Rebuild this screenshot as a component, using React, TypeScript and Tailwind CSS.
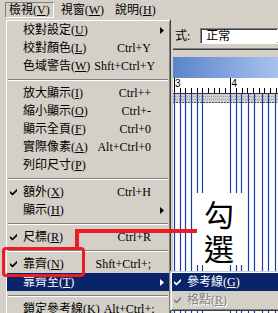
type MenuItem =
  | { sep: true }
  | {
      sep?: false;
      label: string;
      hotkey: string;
      shortcut?: string;
      checked?: boolean;
      sub?: boolean;
      active?: boolean;
    };

const menuItems: MenuItem[] = [
  { label: "校對設定", hotkey: "U", sub: true },
  { label: "校對顏色", hotkey: "L", shortcut: "Ctrl+Y" },
  { label: "色域警告", hotkey: "W", shortcut: "Shft+Ctrl+Y" },
  { sep: true },
  { label: "放大顯示", hotkey: "I", shortcut: "Ctrl++" },
  { label: "縮小顯示", hotkey: "O", shortcut: "Ctrl+-" },
  { label: "顯示全頁", hotkey: "F", shortcut: "Ctrl+0" },
  { label: "實際像素", hotkey: "A", shortcut: "Alt+Ctrl+0" },
  { label: "列印尺寸", hotkey: "P" },
  { sep: true },
  { label: "額外", hotkey: "X", shortcut: "Ctrl+H", checked: true },
  { label: "顯示", hotkey: "H", sub: true },
  { sep: true },
  { label: "尺標", hotkey: "R", shortcut: "Ctrl+R", checked: true },
  { sep: true },
  { label: "靠齊", hotkey: "N", shortcut: "Shft+Ctrl+;", checked: true },
  { label: "靠齊至", hotkey: "T", sub: true, active: true },
  { sep: true },
  { label: "鎖定參考線", hotkey: "K", shortcut: "Alt+Ctrl+;" },
];

// guide lines, x relative to the document's left edge
const guides = [1, 7, 12, 18, 24, 29, 57, 63, 68, 75, 81, 89, 95, 102];

const Check = ({ color = "#000" }: { color?: string }) => (
  <svg width="7" height="8" viewBox="0 0 7 8">
    <polygon points="0,3 2.5,5.3 7,0.8 7,3.2 2.5,7.6 0,5.3" fill={color} />
  </svg>
);

const Arrow = ({ color = "#000" }: { color?: string }) => (
  <svg width="4" height="7" viewBox="0 0 4 7" className="absolute right-[5px] top-[5.5px]">
    <polygon points="0,0 4,3.5 0,7" fill={color} />
  </svg>
);

const Label = ({ label, hotkey }: { label: string; hotkey: string }) => (
  <span className="whitespace-nowrap">
    {label}(<span className="underline underline-offset-1">{hotkey}</span>)
  </span>
);

const Separator = () => (
  <div className="flex h-[9px] items-center px-[1px]">
    <div className="h-[2px] w-full border-t border-t-[#808080] border-b border-b-white" />
  </div>
);

const Ruler = () => {
  const ticks = [];
  for (let x = 1; x < 105; x += 5.65) ticks.push(Math.round(x) + 0.5);
  return (
    <svg width="105" height="235" viewBox="0 0 105 235" className="block">
      <rect x="0" y="0" width="105" height="15" fill="#fff" />
      {ticks.map((x) => (
        <line key={x} x1={x} y1="10" x2={x} y2="15" stroke="#000" strokeWidth="1" />
      ))}
      <line x1="1.5" y1="0" x2="1.5" y2="15" stroke="#000" />
      <line x1="57.5" y1="0" x2="57.5" y2="15" stroke="#000" />
      <text x="2" y="9" fontSize="10" fontFamily="Liberation Sans, sans-serif" fill="#000">3</text>
      <text x="58.5" y="9" fontSize="10" fontFamily="Liberation Sans, sans-serif" fill="#000">4</text>
      <rect x="0" y="15" width="105" height="10" fill="#cfd0d2" />
      <line x1="0" y1="15.5" x2="105" y2="15.5" stroke="#303030" />
      <line x1="0" y1="18.5" x2="105" y2="18.5" stroke="#a0a0a0" strokeDasharray="1 1" />
      <line x1="0" y1="21.5" x2="105" y2="21.5" stroke="#a0a0a0" strokeDasharray="1 1" />
      <line x1="0" y1="24.5" x2="105" y2="24.5" stroke="#505050" strokeDasharray="2 1" />
      <rect x="0" y="25" width="105" height="210" fill="#fff" />
      {guides.map((x) => (
        <line key={x} x1={x + 0.5} y1="16" x2={x + 0.5} y2="235" stroke="#1d3ea6" strokeWidth="1.2" />
      ))}
    </svg>
  );
};

export default function App() {
  return (
    <div className="relative flex h-[313px] w-[278px] flex-col overflow-hidden bg-[#d4d0c8] text-[12px] text-black font-['Liberation_Serif','Noto_Sans_CJK_TC',serif]">
      {/* menubar */}
      <div className="flex h-[19px] items-start pl-[5px] pt-[2px]">
        <div className="flex h-[16px] items-center border border-t-[#808080] border-l-[#808080] border-b-white border-r-white px-[3px] leading-none">
          <Label label="檢視" hotkey="V" />
        </div>
        <div className="ml-[7px] flex h-[16px] items-center leading-none">
          <Label label="視窗" hotkey="W" />
        </div>
        <div className="ml-[11px] flex h-[16px] items-center leading-none">
          <Label label="說明" hotkey="H" />
        </div>
      </div>

      {/* options bar */}
      <div className="flex h-[29px] items-start pl-[175px] pt-[9px]">
        <span className="leading-[16px] whitespace-nowrap">式:</span>
        <div className="ml-[10px] flex h-[16px] w-[92px] shrink-0 items-center border border-t-[#808080] border-l-[#808080] border-b-white border-r-white bg-white shadow-[inset_1px_1px_0_#404040]">
          <span className="pl-[5px] leading-none">正常</span>
          <div className="ml-auto h-full w-[14px] border border-t-white border-l-white border-b-[#404040] border-r-[#808080] bg-[#d4d0c8]" />
        </div>
      </div>
      <div className="ml-[173px] h-[2px] border-t border-t-[#808080] border-b border-b-[#404040]" />
      <div className="h-[7px]" />

      {/* document window */}
      <div className="ml-[173px] flex flex-1 flex-col">
        <div className="h-[21px] bg-[linear-gradient(90deg,#5a84cc,#a8c2ec)]" />
        <Ruler />
      </div>

      {/* annotation text */}
      <div className="absolute left-[194px] top-[193px] flex h-[72px] w-[50px] flex-col items-center bg-white pt-[3px] text-[30px] leading-[34px] text-black font-['Noto_Sans_CJK_TC',sans-serif]">
        <span>勾</span>
        <span>選</span>
      </div>

      {/* view menu */}
      <div className="absolute left-[5px] top-[19px] w-[166px] border border-t-[#d4d0c8] border-l-[#d4d0c8] border-b-[#404040] border-r-[#404040] bg-[#d4d0c8] p-[1px] shadow-[inset_1px_1px_0_#fff,inset_-1px_-1px_0_#808080]">
        {menuItems.map((item, i) =>
          item.sep ? (
            <Separator key={i} />
          ) : (
            <div
              key={i}
              className={`relative flex h-[18px] items-center leading-none ${
                item.active ? "bg-[#0a246a] text-white" : "text-black"
              }`}
            >
              <span className="flex w-[16px] shrink-0 pl-[3px]">
                {item.checked && <Check color={item.active ? "#fff" : "#000"} />}
              </span>
              <Label label={item.label} hotkey={item.hotkey} />
              {item.shortcut && (
                <span className="ml-auto whitespace-nowrap pl-[4px] pr-[18px]">{item.shortcut}</span>
              )}
              {item.sub && <Arrow color={item.active ? "#fff" : "#000"} />}
            </div>
          )
        )}
      </div>

      {/* snap to submenu */}
      <div className="absolute left-[170px] top-[271px] w-[120px] border border-t-[#d4d0c8] border-l-[#d4d0c8] border-b-[#404040] border-r-[#404040] bg-[#d4d0c8] p-[1px] shadow-[inset_1px_1px_0_#fff,inset_-1px_-1px_0_#808080]">
        <div className="flex h-[18px] items-center bg-[#0a246a] leading-none text-white">
          <span className="flex w-[15px] shrink-0 pl-[2px]">
            <Check color="#fff" />
          </span>
          <Label label="參考線" hotkey="G" />
        </div>
        <div className="flex h-[18px] items-center leading-none text-[#808080] [text-shadow:1px_1px_0_#fff]">
          <span className="flex w-[15px] shrink-0 pl-[2px]">
            <Check color="#808080" />
          </span>
          <Label label="格點" hotkey="R" />
        </div>
      </div>

      {/* red callout */}
      <div className="absolute left-[75px] top-[229px] h-[4px] w-[122px] bg-[#ec1c24]" />
      <div className="absolute left-[75px] top-[229px] h-[20px] w-[4px] bg-[#ec1c24]" />
      <div className="absolute left-[2px] top-[247px] h-[30px] w-[83px] rounded-[4px] border-[3px] border-[#ec1c24]" />
    </div>
  );
}
